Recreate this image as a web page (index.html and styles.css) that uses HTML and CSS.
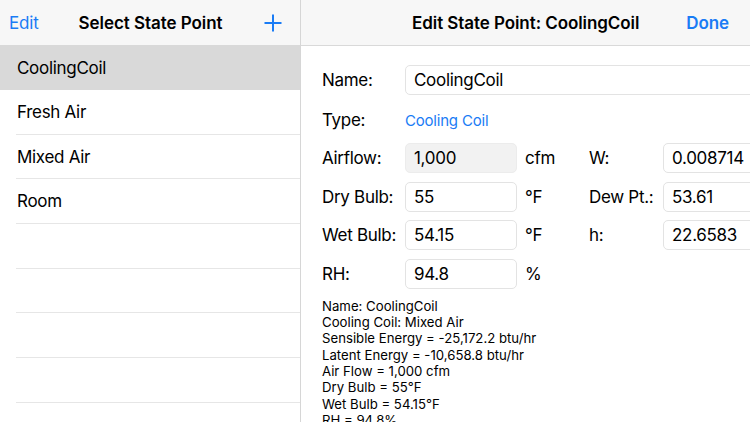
FILE: index.html
```html
<!DOCTYPE html>
<html>
<head>
<meta charset="utf-8">
<link rel="stylesheet" href="styles.css">
</head>
<body>
<div class="app">
  <div class="master">
    <div class="nav">
      <span class="nav-btn">Edit</span>
      <span class="nav-title">Select State Point</span>
      <span class="nav-plus">
        <svg width="20" height="20" viewBox="0 0 20 20"><path d="M10 1.5V18.5M1.5 10H18.5" stroke="#1a7cf5" stroke-width="2" fill="none"/></svg>
      </span>
    </div>
    <ul class="list">
      <li class="row selected"><span>CoolingCoil</span></li>
      <li class="row"><span>Fresh Air</span></li>
      <li class="row"><span>Mixed Air</span></li>
      <li class="row"><span>Room</span></li>
      <li class="row"><span></span></li>
      <li class="row"><span></span></li>
      <li class="row"><span></span></li>
      <li class="row"><span></span></li>
      <li class="row"><span></span></li>
    </ul>
  </div>
  <div class="detail">
    <div class="nav nav-detail">
      <span class="nav-title">Edit State Point: CoolingCoil</span>
      <span class="nav-btn done">Done</span>
    </div>
    <div class="form">
      <div class="line">
        <span class="lbl">Name:</span>
        <div class="field wide">CoolingCoil</div>
      </div>
      <div class="line type-line">
        <span class="lbl">Type:</span>
        <span class="link">Cooling Coil</span>
      </div>
      <div class="line">
        <span class="lbl">Airflow:</span>
        <div class="field disabled">1,000</div>
        <span class="unit">cfm</span>
        <span class="lbl2">W:</span>
        <div class="field side">0.008714</div>
      </div>
      <div class="line">
        <span class="lbl">Dry Bulb:</span>
        <div class="field">55</div>
        <span class="unit">°F</span>
        <span class="lbl2">Dew Pt.:</span>
        <div class="field side">53.61</div>
      </div>
      <div class="line">
        <span class="lbl">Wet Bulb:</span>
        <div class="field">54.15</div>
        <span class="unit">°F</span>
        <span class="lbl2">h:</span>
        <div class="field side">22.6583</div>
      </div>
      <div class="line">
        <span class="lbl">RH:</span>
        <div class="field">94.8</div>
        <span class="unit">%</span>
      </div>
      <div class="summary">
        <div>Name: CoolingCoil</div>
        <div>Cooling Coil: Mixed Air</div>
        <div>Sensible Energy = -25,172.2 btu/hr</div>
        <div>Latent Energy = -10,658.8 btu/hr</div>
        <div>Air Flow = 1,000 cfm</div>
        <div>Dry Bulb = 55°F</div>
        <div>Wet Bulb = 54.15°F</div>
        <div>RH = 94.8%</div>
      </div>
    </div>
  </div>
</div>
</body>
</html>
```
FILE: styles.css
```css
* { box-sizing: border-box; }
html, body {
  margin: 0;
  padding: 0;
  width: 750px;
  height: 422px;
  overflow: hidden;
  background: #fff;
  font-family: Inter, "Noto Sans", "Liberation Sans", sans-serif;
  color: #000;
}
.app {
  display: flex;
  width: 750px;
  height: 422px;
}
.master {
  width: 301px;
  flex: none;
  border-right: 1px solid #d6d6d6;
  height: 100%;
  overflow: hidden;
}
.detail {
  flex: 1;
  min-width: 0;
  overflow: hidden;
  height: 100%;
}
.nav {
  height: 46px;
  background: #f7f7f7;
  border-bottom: 1px solid #d9d9d9;
  display: flex;
  align-items: center;
  padding: 0 15px 0 9px;
  position: relative;
  font-size: 17px;
}
.nav-btn {
  color: #1a7cf5;
  letter-spacing: -0.2px;
}
.nav-title {
  font-weight: 600;
  letter-spacing: -0.05px;
  margin-left: 40px;
}
.nav-plus {
  margin-left: auto;
  display: flex;
  margin-right: 2px;
}
.nav-detail {
  padding: 0 21px 0 111px;
}
.nav-detail .nav-title {
  margin-left: 0;
  letter-spacing: -0.07px;
}
.done {
  margin-left: auto;
  font-weight: 600;
  letter-spacing: -0.1px;
}
.list {
  list-style: none;
  margin: 0;
  padding: 0;
}
.row {
  height: 44.7px;
  padding-left: 16px;
  font-size: 17px;
  letter-spacing: -0.3px;
}
.row span {
  display: flex;
  align-items: center;
  height: 100%;
  border-bottom: 1px solid #e6e6e6;
  padding-left: 1px;
}
.row.selected {
  background: #d9d9d9;
  height: 44px;
}
.row.selected span { border-bottom: none; }
.form {
  padding: 19px 0 0 21px;
  font-size: 17px;
  letter-spacing: -0.3px;
}
.line {
  display: flex;
  align-items: center;
  height: 30px;
  margin-bottom: 8.7px;
  white-space: nowrap;
}
.type-line {
  height: 20px;
  margin-top: 15px;
  margin-bottom: 13px;
}
.lbl {
  width: 83px;
  flex: none;
}
.field {
  width: 112px;
  height: 30px;
  border: 1px solid #e3e3e3;
  border-radius: 5px;
  padding-left: 8px;
  display: flex;
  align-items: center;
  flex: none;
}
.field.wide { width: 400px; }
.field.disabled {
  background: #f2f2f2;
  border-color: #ececec;
}
.unit {
  width: 72px;
  padding-left: 8px;
  flex: none;
}
.lbl2 {
  width: 74px;
  flex: none;
}
.field.side { width: 120px; }
.link { color: #1a7cf5; font-size: 15px; letter-spacing: -0.2px; }
.summary {
  font-size: 13.2px;
  line-height: 16.3px;
  letter-spacing: 0;
  margin-top: 6px;
}
```
